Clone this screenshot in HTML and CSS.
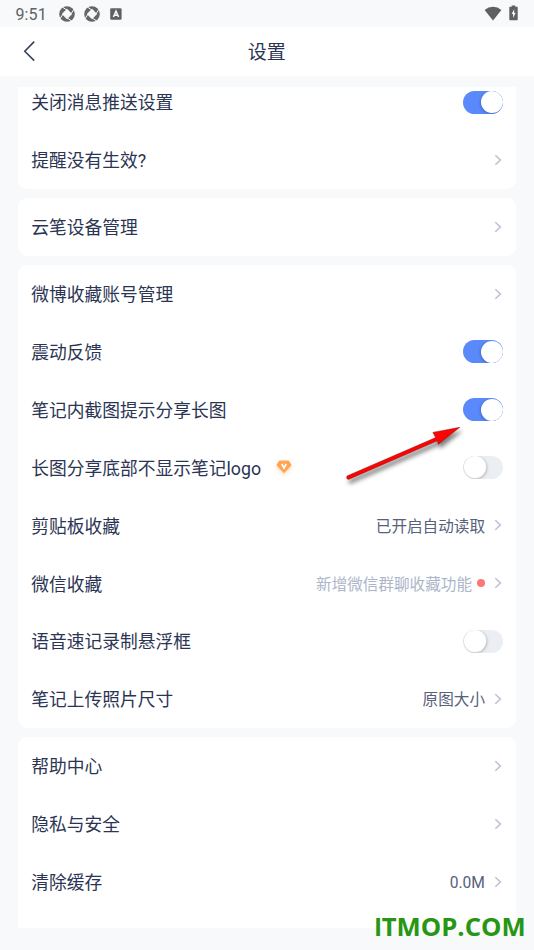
FILE: index.html
```html
<!DOCTYPE html>
<html lang="zh-CN">
<head>
<meta charset="utf-8">
<title>设置</title>
<link rel="stylesheet" href="styles.css">
</head>
<body>
<svg class="defs" width="0" height="0" aria-hidden="true">
  <symbol id="chevron" viewBox="0 0 8 12"><path d="M1.3 1.2 6.4 6 1.3 10.8" fill="none" stroke="#b9c1d0" stroke-width="1.5"/></symbol>
  <symbol id="aperture" viewBox="0 0 16 16">
    <circle cx="8" cy="8" r="7.8" fill="#666"/>
    <path d="M8 2.8 13.2 8 8 13.2 2.8 8Z" fill="#f7f9fb"/>
    <path d="M7.5 3.8 4.2 1.6M12.2 7.5 14.4 4.2M8.5 12.2 11.8 14.4M3.8 8.5 1.6 11.8" stroke="#f7f9fb" stroke-width="1" stroke-linecap="square"/>
  </symbol>
</svg>
<div class="screen">
  <header class="status">
    <span class="time">9:51</span>
    <svg class="ap" width="16" height="16"><use href="#aperture"/></svg>
    <svg class="ap2" width="16" height="16"><use href="#aperture"/></svg>
    <svg class="abox" width="12" height="12" viewBox="0 0 12 12"><rect x=".2" y=".2" width="11.4" height="11.6" rx="1.2" fill="#606060"/><path d="M3.4 9 6 3.2 8.6 9M4.4 7.2H7.6" fill="none" stroke="#f7f9fb" stroke-width="1.5"/></svg>
    <svg class="wifi" width="18" height="15" viewBox="0 0 18 15"><path d="M.6 3.9Q4.3.8 9 .8T17.4 3.9L9 14.4Z" fill="#606060"/></svg>
    <svg class="battery" width="9" height="16" viewBox="0 0 9 16"><path d="M2.7.4H6.3V1.8H8Q8.7 1.8 8.7 2.5V14.6Q8.7 15.3 8 15.3H1Q.3 15.3.3 14.6V2.5Q.3 1.8 1 1.8H2.7Z" fill="#606060"/><path d="M5.3 4 2.6 9H4.1V13L6.7 7.8H5.1Z" fill="#f7f9fb"/></svg>
  </header>
  <nav class="navbar">
    <svg class="back" width="13" height="22" viewBox="0 0 13 22"><path d="M11.2 1.6 1.8 11.2 11.2 20.6" fill="none" stroke="#39435f" stroke-width="1.6"/></svg>
    <h1>设置</h1>
  </nav>
  <main class="list">
    <section class="card first">
      <div class="row"><span class="label">关闭消息推送设置</span><i class="switch on"></i></div>
      <div class="row"><span class="label">提醒没有生效?</span><svg class="chev"><use href="#chevron"/></svg></div>
    </section>
    <section class="card">
      <div class="row"><span class="label">云笔设备管理</span><svg class="chev"><use href="#chevron"/></svg></div>
    </section>
    <section class="card">
      <div class="row"><span class="label">微博收藏账号管理</span><svg class="chev"><use href="#chevron"/></svg></div>
      <div class="row"><span class="label">震动反馈</span><i class="switch on"></i></div>
      <div class="row"><span class="label">笔记内截图提示分享长图</span><i class="switch on"></i></div>
      <div class="row"><span class="label">长图分享底部不显示笔记logo</span>
        <svg class="gem" width="16" height="14" viewBox="0 0 16 14"><path d="M3.7 1.2H12.3L14.9 5 8 12.4 1.1 5Z" fill="#ffa552" stroke="#ffa552" stroke-width="1.2" stroke-linejoin="round"/><path d="M5.8 4 8 8 10.2 4" fill="none" stroke="#fff" stroke-width="1.7"/></svg>
        <i class="switch"></i></div>
      <div class="row"><span class="label">剪贴板收藏</span><span class="value">已开启自动读取</span><svg class="chev"><use href="#chevron"/></svg></div>
      <div class="row"><span class="label">微信收藏</span><span class="value hint">新增微信群聊收藏功能</span><i class="dot"></i><svg class="chev"><use href="#chevron"/></svg></div>
      <div class="row"><span class="label">语音速记录制悬浮框</span><i class="switch"></i></div>
      <div class="row"><span class="label">笔记上传照片尺寸</span><span class="value">原图大小</span><svg class="chev"><use href="#chevron"/></svg></div>
    </section>
    <section class="card">
      <div class="row"><span class="label">帮助中心</span><svg class="chev"><use href="#chevron"/></svg></div>
      <div class="row"><span class="label">隐私与安全</span><svg class="chev"><use href="#chevron"/></svg></div>
      <div class="row"><span class="label">清除缓存</span><span class="value">0.0M</span><svg class="chev"><use href="#chevron"/></svg></div>
      <div class="row"></div>
    </section>
  </main>
  <svg class="arrow" width="130" height="70" viewBox="0 0 130 70"><path d="M7 56 95.8 17.6 92.8 12.4 119.8 7.3 98.4 24.2 97.4 20.8 8.5 59.4Q5.8 59 7 56Z" fill="#fc0404" stroke="#8a1010" stroke-width=".5"/></svg>
  <div class="watermark"><span class="sans">I</span>TMOP.COM</div>
</div>
</body>
</html>
```
FILE: styles.css
```css
* { box-sizing: border-box; }
body { margin: 0; font-family: Roboto, "Noto Sans CJK SC", sans-serif; font-weight: 400; }
.defs { position: absolute; }
.screen { position: relative; width: 534px; height: 950px; overflow: hidden; background: #f7f9fb; }
.status { display: flex; align-items: center; height: 27px; padding: 0 16px 0 15.5px; }
.time { width: 43.5px; padding-top: 1px; font-size: 16px; letter-spacing: .1px; color: #616161; }
.ap2 { margin-left: 8.5px; }
.abox { margin-left: 10.5px; }
.wifi { margin-left: auto; margin-right: 7px; margin-top: -1px; }
.battery { margin-top: -2px; }
.navbar { display: flex; align-items: center; height: 49px; background: #fff; padding-left: 22.5px; }
.back { margin-top: -1px; }
h1 { margin: 0 auto; padding: 2px 36px 0 0; font-size: 19px; font-weight: 400; line-height: 28px; color: #2b3553; }
.list { margin: 11px 18px 0; height: 841px; overflow: hidden; }
.card { background: #fff; border-radius: 9px; margin-bottom: 9px; }
.first { margin-top: -13.8px; }
.row { display: flex; align-items: center; height: 57.9px; padding: 0 13px; white-space: nowrap; }
.label { margin-right: auto; padding-top: 2.5px; padding-left: .3px; font-size: 17.75px; line-height: 26px; color: #2b3553; }
.value { padding-top: 2.5px; font-size: 15.6px; line-height: 24px; color: #57617a; }
.hint { color: #adb6c9; }
.chev { width: 8px; height: 12px; margin: 0 1px 0 9px; flex: none; }
.dot { width: 8px; height: 8px; border-radius: 50%; background: #ff7676; margin: -1px 0 0 5px; }
.dot + .chev { margin-left: 9px; }
.switch { display: flex; width: 40px; height: 23px; border-radius: 12px; background: #ebeef3; padding: .5px; overflow: hidden; flex: none; }
.switch::before { content: ""; width: 22px; height: 22px; border-radius: 50%; background: #fff; box-shadow: 0 0 0 .5px #dcdcdc, 1px 1px 3px rgba(0,0,0,.25); }
.switch.on { background: #5989fb; justify-content: flex-end; }
.switch.on::before { box-shadow: -1px 1px 3px rgba(0,0,0,.2); }
.label:has(+ .gem) { margin-right: 15px; }
.gem { margin: -1px auto 0 0; overflow: visible; filter: drop-shadow(0 2px 2px rgba(255,165,82,.4)); }
.arrow { position: absolute; left: 340px; top: 420px; filter: drop-shadow(2px 4px 2px rgba(0,0,0,.5)); }
.watermark { position: absolute; left: 374.5px; top: 909px; font: 700 25.7px/36px "Open Sans", sans-serif; color: #279614; white-space: nowrap; }
.sans { font-family: "Liberation Sans", sans-serif; }
```
